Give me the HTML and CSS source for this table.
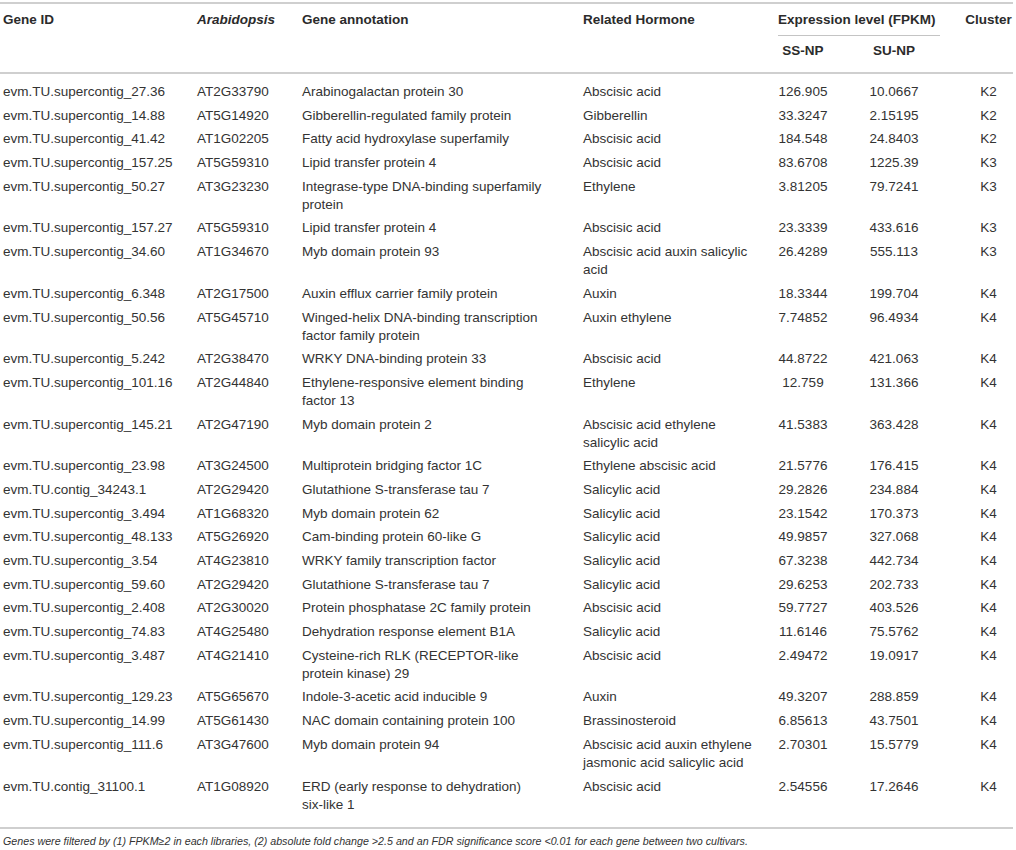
FILE: index.html
```html
<!DOCTYPE html>
<html lang="en">
<head>
<meta charset="utf-8">
<title>Gene table</title>
<link rel="stylesheet" href="styles.css">
</head>
<body>
<table class="genes">
  <colgroup>
    <col class="c-id"><col class="c-at"><col class="c-ann"><col class="c-hor"><col class="c-ss"><col class="c-su"><col class="c-cl">
  </colgroup>
  <thead>
    <tr class="h1">
      <th rowspan="2">Gene ID</th>
      <th rowspan="2"><em>Arabidopsis</em></th>
      <th rowspan="2">Gene annotation</th>
      <th rowspan="2">Related Hormone</th>
      <th colspan="2" class="expr"><div class="expr-label">Expression level (FPKM)</div></th>
      <th rowspan="2" class="cl">Cluster</th>
    </tr>
    <tr class="h2">
      <th class="ss">SS-NP</th>
      <th class="su">SU-NP</th>
    </tr>
  </thead>
  <tbody>
    <tr><td>evm.TU.supercontig_27.36</td><td>AT2G33790</td><td class="ann">Arabinogalactan protein 30</td><td class="hor">Abscisic acid</td><td class="ss">126.905</td><td class="su">10.0667</td><td class="cl">K2</td></tr>
    <tr><td>evm.TU.supercontig_14.88</td><td>AT5G14920</td><td class="ann">Gibberellin-regulated family protein</td><td class="hor">Gibberellin</td><td class="ss">33.3247</td><td class="su">2.15195</td><td class="cl">K2</td></tr>
    <tr><td>evm.TU.supercontig_41.42</td><td>AT1G02205</td><td class="ann">Fatty acid hydroxylase superfamily</td><td class="hor">Abscisic acid</td><td class="ss">184.548</td><td class="su">24.8403</td><td class="cl">K2</td></tr>
    <tr><td>evm.TU.supercontig_157.25</td><td>AT5G59310</td><td class="ann">Lipid transfer protein 4</td><td class="hor">Abscisic acid</td><td class="ss">83.6708</td><td class="su">1225.39</td><td class="cl">K3</td></tr>
    <tr><td>evm.TU.supercontig_50.27</td><td>AT3G23230</td><td class="ann">Integrase-type DNA-binding superfamily protein</td><td class="hor">Ethylene</td><td class="ss">3.81205</td><td class="su">79.7241</td><td class="cl">K3</td></tr>
    <tr><td>evm.TU.supercontig_157.27</td><td>AT5G59310</td><td class="ann">Lipid transfer protein 4</td><td class="hor">Abscisic acid</td><td class="ss">23.3339</td><td class="su">433.616</td><td class="cl">K3</td></tr>
    <tr><td>evm.TU.supercontig_34.60</td><td>AT1G34670</td><td class="ann">Myb domain protein 93</td><td class="hor">Abscisic acid auxin salicylic acid</td><td class="ss">26.4289</td><td class="su">555.113</td><td class="cl">K3</td></tr>
    <tr><td>evm.TU.supercontig_6.348</td><td>AT2G17500</td><td class="ann">Auxin efflux carrier family protein</td><td class="hor">Auxin</td><td class="ss">18.3344</td><td class="su">199.704</td><td class="cl">K4</td></tr>
    <tr><td>evm.TU.supercontig_50.56</td><td>AT5G45710</td><td class="ann">Winged-helix DNA-binding transcription factor family protein</td><td class="hor">Auxin ethylene</td><td class="ss">7.74852</td><td class="su">96.4934</td><td class="cl">K4</td></tr>
    <tr><td>evm.TU.supercontig_5.242</td><td>AT2G38470</td><td class="ann">WRKY DNA-binding protein 33</td><td class="hor">Abscisic acid</td><td class="ss">44.8722</td><td class="su">421.063</td><td class="cl">K4</td></tr>
    <tr><td>evm.TU.supercontig_101.16</td><td>AT2G44840</td><td class="ann">Ethylene-responsive element binding factor 13</td><td class="hor">Ethylene</td><td class="ss">12.759</td><td class="su">131.366</td><td class="cl">K4</td></tr>
    <tr><td>evm.TU.supercontig_145.21</td><td>AT2G47190</td><td class="ann">Myb domain protein 2</td><td class="hor">Abscisic acid ethylene salicylic acid</td><td class="ss">41.5383</td><td class="su">363.428</td><td class="cl">K4</td></tr>
    <tr><td>evm.TU.supercontig_23.98</td><td>AT3G24500</td><td class="ann">Multiprotein bridging factor 1C</td><td class="hor">Ethylene abscisic acid</td><td class="ss">21.5776</td><td class="su">176.415</td><td class="cl">K4</td></tr>
    <tr><td>evm.TU.contig_34243.1</td><td>AT2G29420</td><td class="ann">Glutathione S-transferase tau 7</td><td class="hor">Salicylic acid</td><td class="ss">29.2826</td><td class="su">234.884</td><td class="cl">K4</td></tr>
    <tr><td>evm.TU.supercontig_3.494</td><td>AT1G68320</td><td class="ann">Myb domain protein 62</td><td class="hor">Salicylic acid</td><td class="ss">23.1542</td><td class="su">170.373</td><td class="cl">K4</td></tr>
    <tr><td>evm.TU.supercontig_48.133</td><td>AT5G26920</td><td class="ann">Cam-binding protein 60-like G</td><td class="hor">Salicylic acid</td><td class="ss">49.9857</td><td class="su">327.068</td><td class="cl">K4</td></tr>
    <tr><td>evm.TU.supercontig_3.54</td><td>AT4G23810</td><td class="ann">WRKY family transcription factor</td><td class="hor">Salicylic acid</td><td class="ss">67.3238</td><td class="su">442.734</td><td class="cl">K4</td></tr>
    <tr><td>evm.TU.supercontig_59.60</td><td>AT2G29420</td><td class="ann">Glutathione S-transferase tau 7</td><td class="hor">Salicylic acid</td><td class="ss">29.6253</td><td class="su">202.733</td><td class="cl">K4</td></tr>
    <tr><td>evm.TU.supercontig_2.408</td><td>AT2G30020</td><td class="ann">Protein phosphatase 2C family protein</td><td class="hor">Abscisic acid</td><td class="ss">59.7727</td><td class="su">403.526</td><td class="cl">K4</td></tr>
    <tr><td>evm.TU.supercontig_74.83</td><td>AT4G25480</td><td class="ann">Dehydration response element B1A</td><td class="hor">Salicylic acid</td><td class="ss">11.6146</td><td class="su">75.5762</td><td class="cl">K4</td></tr>
    <tr><td>evm.TU.supercontig_3.487</td><td>AT4G21410</td><td class="ann">Cysteine-rich RLK (RECEPTOR-like protein kinase) 29</td><td class="hor">Abscisic acid</td><td class="ss">2.49472</td><td class="su">19.0917</td><td class="cl">K4</td></tr>
    <tr><td>evm.TU.supercontig_129.23</td><td>AT5G65670</td><td class="ann">Indole-3-acetic acid inducible 9</td><td class="hor">Auxin</td><td class="ss">49.3207</td><td class="su">288.859</td><td class="cl">K4</td></tr>
    <tr><td>evm.TU.supercontig_14.99</td><td>AT5G61430</td><td class="ann">NAC domain containing protein 100</td><td class="hor">Brassinosteroid</td><td class="ss">6.85613</td><td class="su">43.7501</td><td class="cl">K4</td></tr>
    <tr><td>evm.TU.supercontig_111.6</td><td>AT3G47600</td><td class="ann">Myb domain protein 94</td><td class="hor">Abscisic acid auxin ethylene jasmonic acid salicylic acid</td><td class="ss">2.70301</td><td class="su">15.5779</td><td class="cl">K4</td></tr>
    <tr><td>evm.TU.contig_31100.1</td><td>AT1G08920</td><td class="ann">ERD (early response to dehydration) <span class="nw">six-like 1</span></td><td class="hor">Abscisic acid</td><td class="ss">2.54556</td><td class="su">17.2646</td><td class="cl">K4</td></tr>
  </tbody>
</table>
<p class="note">Genes were filtered by (1) FPKM≥2 in each libraries, (2) absolute fold change &gt;2.5 and an FDR significance score &lt;0.01 for each gene between two cultivars.</p>
</body>
</html>
```

FILE: styles.css
```css
html, body {
  margin: 0;
  padding: 0;
  background: #ffffff;
}

body {
  font-family: "Liberation Sans", Arial, sans-serif;
  color: #333333;
  font-size: 13.5px;
}

.genes {
  margin-top: 2px;
  width: 1013px;
  table-layout: fixed;
  border-collapse: separate;
  border-spacing: 0;
  border-top: 2px solid #cfcfcf;
  border-bottom: 2px solid #cfcfcf;
}

.c-id { width: 194px; }
.c-at { width: 105px; }
.c-ann { width: 281px; }
.c-hor { width: 192px; }
.c-ss { width: 62px; }
.c-su { width: 126px; }
.c-cl { width: 53px; }

.genes th,
.genes td {
  line-height: 18px;
  vertical-align: top;
  text-align: left;
  padding: 2.85px 0 2.85px 3px;
}

.genes th {
  font-weight: bold;
  color: #2b2b2b;
}

.genes th em {
  font-style: italic;
}

.genes .h1 th {
  padding-top: 7px;
  padding-bottom: 0;
}

.genes thead th[rowspan],
.genes .h2 th {
  border-bottom: 2px solid #cfcfcf;
}

.genes .h2 th {
  padding-top: 6px;
  padding-bottom: 12px;
}

.expr-label {
  margin: 0 20px 0 3px;
  padding-bottom: 6px;
  border-bottom: 1px solid #c4c4c4;
}

.genes .ann { padding-right: 28px; }
.genes .hor { padding-right: 17px; }

.nw { white-space: nowrap; }

.genes .ss,
.genes th.ss {
  text-align: center;
  padding-left: 0;
}

.genes .su,
.genes th.su {
  text-align: center;
  padding-left: 0;
  padding-right: 6px;
}

.genes .cl,
.genes th.cl {
  text-align: center;
  padding-left: 4px;
}

.genes tbody tr:first-child td {
  padding-top: 9px;
}

.genes tbody tr:last-child td {
  padding-bottom: 13px;
}

.note {
  margin: 5px 0 0 3px;
  font-size: 10.7px;
  line-height: 15px;
  font-style: italic;
  color: #333333;
}
```
